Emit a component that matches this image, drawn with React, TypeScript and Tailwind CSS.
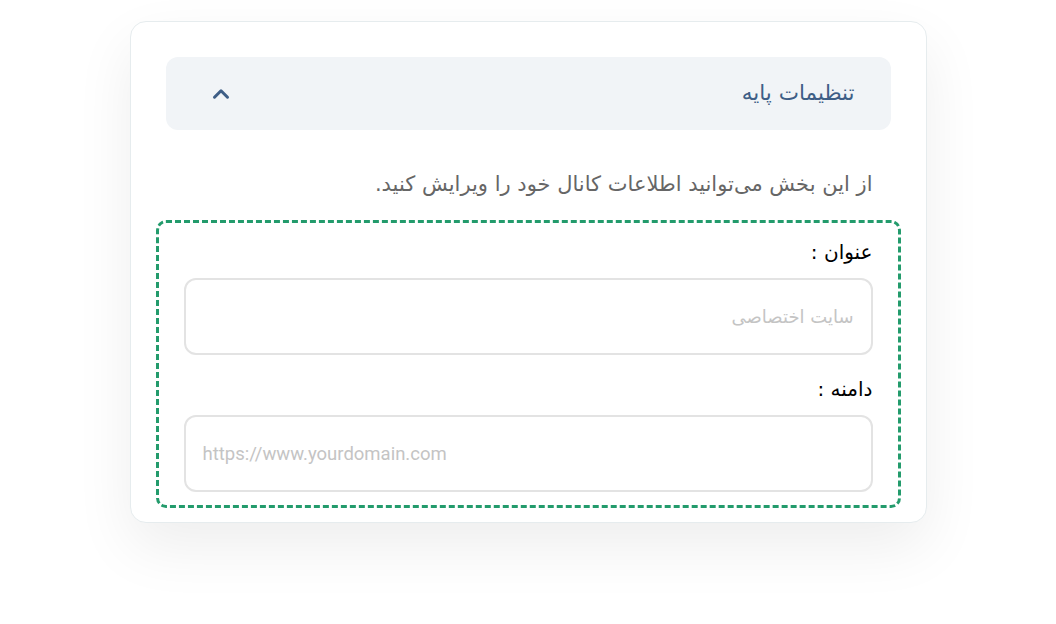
import { ChevronUp } from "lucide-react";

const fa = { fontFamily: '"DejaVu Sans", "Noto Sans", sans-serif' };

function Field({ label, placeholder, ltr }: { label: string; placeholder: string; ltr?: boolean }) {
  return (
    <div>
      <label className="block text-[20px] font-medium leading-[28px] text-black">{label}</label>
      <input
        dir={ltr ? "ltr" : "rtl"}
        placeholder={placeholder}
        className={`mt-3 block h-[77px] w-full rounded-xl border-2 border-[#e3e3e3] bg-white px-[17px] outline-none placeholder:text-[#c4c4c4] ${ltr ? "font-['Roboto',sans-serif] text-[18.5px]" : "text-[18px]"}`}
      />
    </div>
  );
}

export default function App() {
  return (
    <div dir="rtl" className="min-h-[624px] bg-white pt-[21px]" style={fa}>
      <div className="mx-auto w-[797px] rounded-2xl border border-[#e6ecee] bg-white px-[35px] pb-[14px] pt-[35px] shadow-[0_24px_60px_rgba(0,0,0,0.07)]">
        <div className="flex h-[73px] items-center justify-between rounded-xl bg-[#f1f4f7] pl-[42px] pr-[36px]">
          <span className="text-[21.5px] text-[#3e5e86]">تنظیمات پایه</span>
          <ChevronUp size={26} strokeWidth={2.8} className="text-[#3e5e86]" />
        </div>
        <p className="mt-[40px] pr-[18px] text-[21px] leading-[28px] text-[#666]">
          از این بخش می‌توانید اطلاعات کانال خود را ویرایش کنید.
        </p>
        <div className="-mx-[10px] mt-[22px] rounded-[10px] border-[3px] border-dashed border-[#239b6c] px-[25px] pb-[13px] pt-[15px]">
          <Field label="عنوان :" placeholder="سایت اختصاصی" />
          <div className="mt-5">
            <Field label="دامنه :" placeholder="https://www.yourdomain.com" ltr />
          </div>
        </div>
      </div>
    </div>
  );
}
